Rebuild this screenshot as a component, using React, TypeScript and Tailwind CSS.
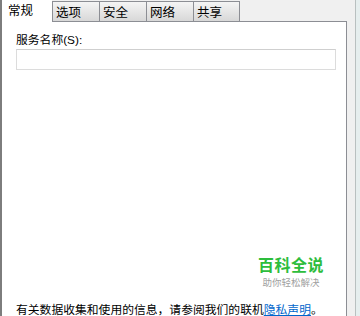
import React from 'react';

const font = { fontFamily: '"Noto Sans CJK SC", "Noto Sans", sans-serif' };
const latin = { fontFamily: '"Liberation Sans", "Noto Sans CJK SC", sans-serif' };

const tabs = ['选项', '安全', '网络', '共享'];

const App: React.FC = () => {
  return (
    <div className="w-[360px] h-[316px] flex bg-[#f0f0f0] overflow-hidden text-black" style={font}>
      <div className="w-[347px] flex flex-col">
        {/* tab strip */}
        <div className="h-[21px] flex items-end">
          <div className="relative z-10 -mb-px w-[52px] h-[22px] bg-white border-l-2 border-[#7d7d7d] pl-[6px] pt-[2px] text-[12.5px] leading-[16px]">
            常规
          </div>
          {tabs.map((t, i) => (
            <div
              key={t}
              className={`h-[20px] w-[47px] border-l border-t border-[#8c8e94] bg-gradient-to-b from-[#f4f4f4] to-[#d8d8d8] pl-[3px] pt-[2px] text-[12.5px] leading-[16px] ${i === 3 ? 'border-r' : ''}`}
            >
              {t}
            </div>
          ))}
        </div>
        {/* panel */}
        <div className="relative flex-1 bg-white border-t border-r border-l-2 border-t-[#8c8e94] border-r-[#8c8e94] border-l-[#7d7d7d] pl-[14px] pr-[10px] pt-[11px]">
          <div className="text-[11.8px] leading-[14px]" style={latin}>服务名称(S):</div>
          <div className="mt-[2px] h-[21px] border border-[#dcdcdc] border-t-[#cfcfcf] bg-white" />
          <div className="absolute left-[256px] top-[235px] flex flex-col items-center">
            <div className="text-[16px] leading-[14px] font-bold text-[#2dbd3c] tracking-[0.5px]">百科全说</div>
            <div className="text-[9.5px] leading-[10px] text-[#a0a0a0] mt-[6px]">助你轻松解决</div>
          </div>
          <div className="absolute left-[14px] top-[280px] text-[11.8px] leading-[14px] whitespace-nowrap">
            有关数据收集和使用的信息，请参阅我们的联机
            <span className="text-[#0066cc] underline">隐私声明</span>。
          </div>
        </div>
      </div>
      {/* right edge */}
      <div className="flex-1 flex">
        <div className="w-[8px] bg-[#f0f0f0]" />
        <div className="w-[1px] bg-[#b9c0c0]" />
        <div className="flex-1 bg-[#e6eeee]" />
      </div>
    </div>
  );
};

export default App;
